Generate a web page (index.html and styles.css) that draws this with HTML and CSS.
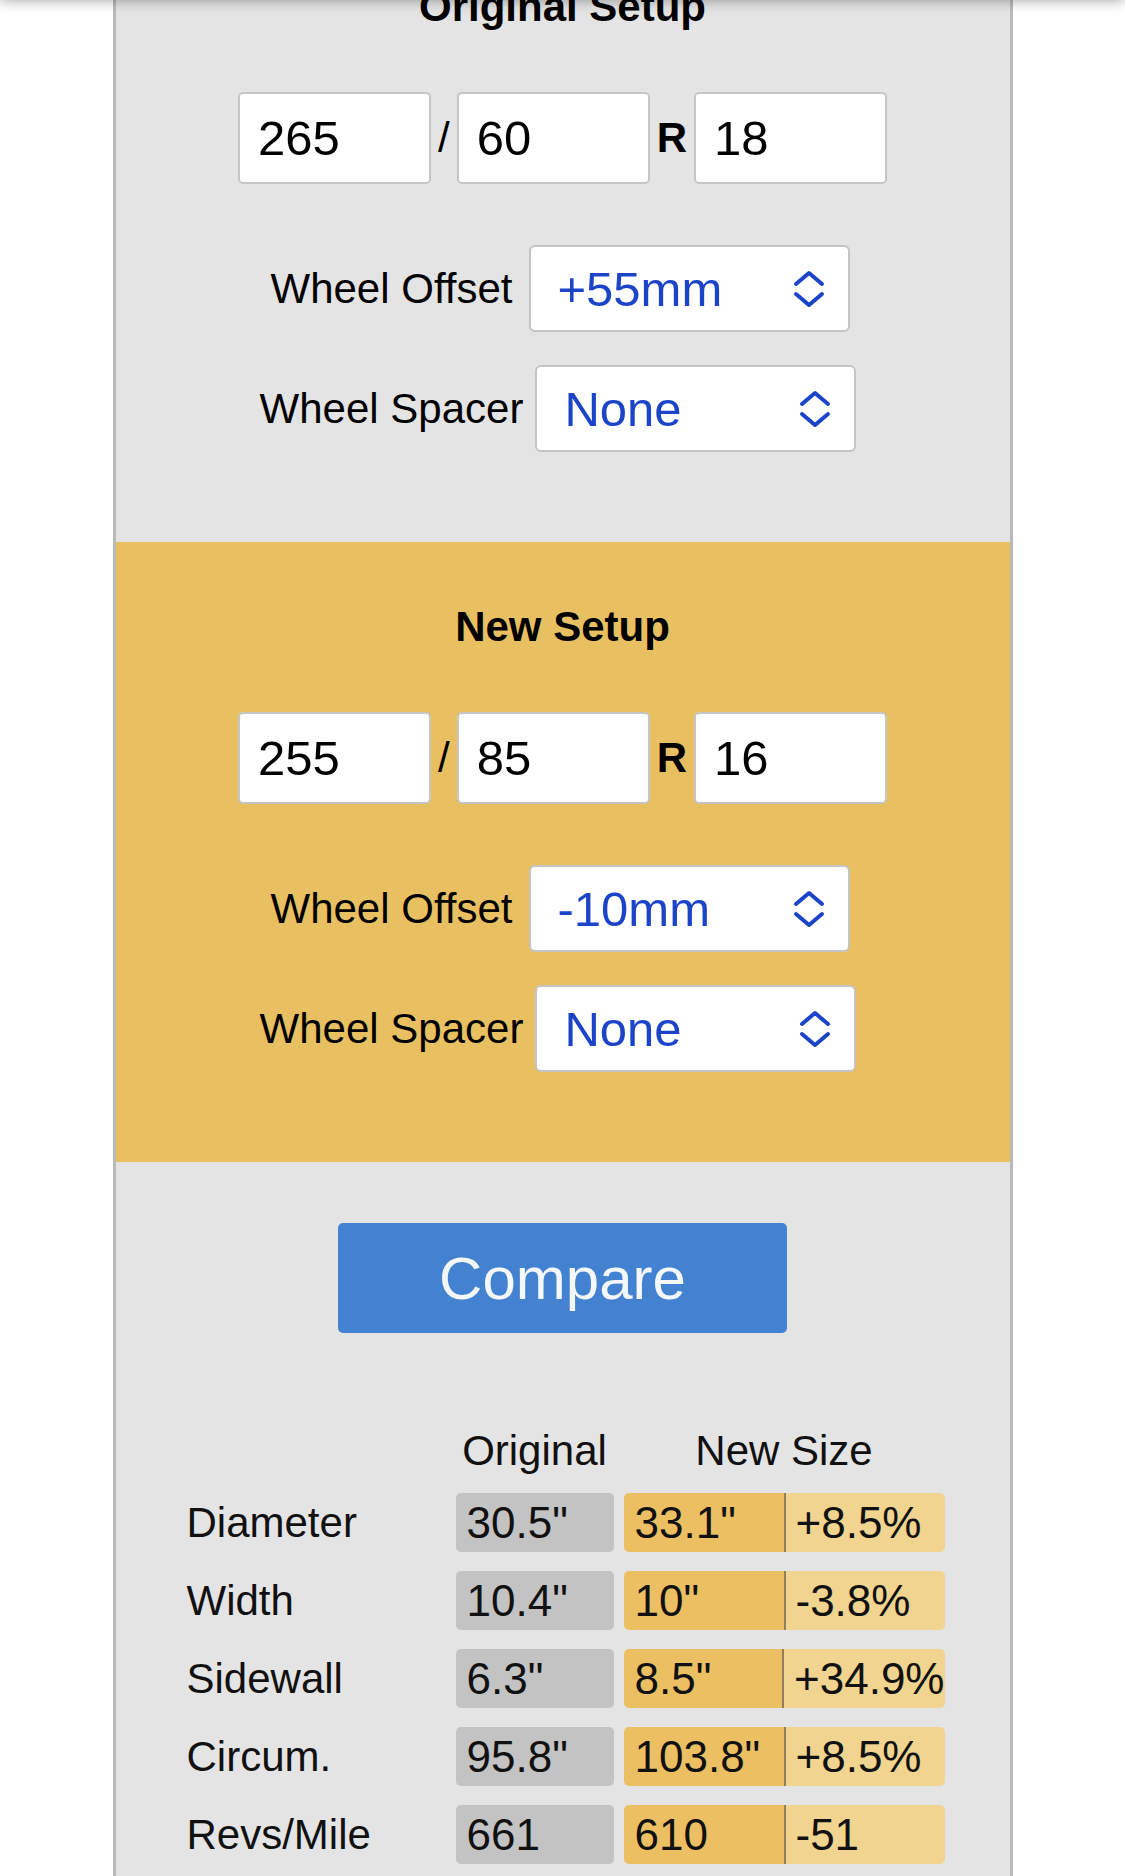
FILE: index.html
```html
<!DOCTYPE html>
<html lang="en">
<head>
<meta charset="utf-8">
<title>Tire Size Comparison</title>
<link rel="stylesheet" href="styles.css">
</head>
<body>
<div class="topbar"></div>
<main class="calc">
  <section class="setup">
    <h2 class="setup-title">Original Setup</h2>
    <div class="size-row">
      <input class="size-input" type="text" value="265">
      <span class="sep">/</span>
      <input class="size-input" type="text" value="60">
      <span class="sep sep-r">R</span>
      <input class="size-input" type="text" value="18">
    </div>
    <div class="field-row field-row-offset">
      <span class="field-label">Wheel Offset</span>
      <div class="select"><span class="select-value">+55mm</span><svg class="chev" viewBox="0 0 34 38" width="34" height="38"><path d="M4 14 L17 3 L30 14 M4 24 L17 35 L30 24"/></svg></div>
    </div>
    <div class="field-row field-row-second">
      <span class="field-label">Wheel Spacer</span>
      <div class="select"><span class="select-value">None</span><svg class="chev" viewBox="0 0 34 38" width="34" height="38"><path d="M4 14 L17 3 L30 14 M4 24 L17 35 L30 24"/></svg></div>
    </div>
  </section>

  <section class="setup setup-new">
    <h2 class="setup-title">New Setup</h2>
    <div class="size-row">
      <input class="size-input" type="text" value="255">
      <span class="sep">/</span>
      <input class="size-input" type="text" value="85">
      <span class="sep sep-r">R</span>
      <input class="size-input" type="text" value="16">
    </div>
    <div class="field-row field-row-offset">
      <span class="field-label">Wheel Offset</span>
      <div class="select"><span class="select-value">-10mm</span><svg class="chev" viewBox="0 0 34 38" width="34" height="38"><path d="M4 14 L17 3 L30 14 M4 24 L17 35 L30 24"/></svg></div>
    </div>
    <div class="field-row field-row-second">
      <span class="field-label">Wheel Spacer</span>
      <div class="select"><span class="select-value">None</span><svg class="chev" viewBox="0 0 34 38" width="34" height="38"><path d="M4 14 L17 3 L30 14 M4 24 L17 35 L30 24"/></svg></div>
    </div>
  </section>

  <div class="actions">
    <button class="compare-btn" type="button">Compare</button>
  </div>

  <div class="results">
    <div class="res-head"></div>
    <div class="res-head">Original</div>
    <div class="res-head">New Size</div>

    <div class="res-label">Diameter</div>
    <div class="cell-orig">30.5"</div>
    <div class="cell-new"><span class="new-val">33.1"</span><span class="new-diff">+8.5%</span></div>

    <div class="res-label">Width</div>
    <div class="cell-orig">10.4"</div>
    <div class="cell-new"><span class="new-val">10"</span><span class="new-diff">-3.8%</span></div>

    <div class="res-label">Sidewall</div>
    <div class="cell-orig">6.3"</div>
    <div class="cell-new"><span class="new-val">8.5"</span><span class="new-diff">+34.9%</span></div>

    <div class="res-label">Circum.</div>
    <div class="cell-orig">95.8"</div>
    <div class="cell-new"><span class="new-val">103.8"</span><span class="new-diff">+8.5%</span></div>

    <div class="res-label">Revs/Mile</div>
    <div class="cell-orig">661</div>
    <div class="cell-new"><span class="new-val">610</span><span class="new-diff">-51</span></div>
  </div>
</main>
</body>
</html>
```

FILE: styles.css
```css
* {
  box-sizing: border-box;
}

html, body {
  margin: 0;
  padding: 0;
  background: #ffffff;
}

body {
  font-family: "Liberation Sans", Arial, Helvetica, sans-serif;
  color: #000;
  overflow: hidden;
}

.topbar {
  position: fixed;
  top: -40px;
  left: 0;
  right: 0;
  height: 40px;
  background: #ffffff;
  box-shadow: 0 0 14px rgba(0, 0, 0, 0.38);
  z-index: 10;
}

.calc {
  width: 900px;
  margin: -78px auto 0;
  background: #e4e4e4;
  border-left: 3px solid #bababa;
  border-right: 3px solid #bababa;
  padding-bottom: 200px;
}

.setup {
  padding: 61px 0 90px;
}

.setup-new {
  background: #e9c061;
}

.setup-title {
  margin: 0;
  font-size: 42px;
  line-height: 48px;
  font-weight: 700;
  text-align: center;
}

.size-row {
  margin-top: 61px;
  display: flex;
  justify-content: center;
  align-items: center;
  gap: 7px;
}

.size-input {
  width: 193px;
  height: 92px;
  margin: 0;
  padding: 0 0 0 18px;
  border: 2px solid #c6c6c6;
  border-radius: 5px;
  background: #fff;
  font-family: "Liberation Sans", Arial, sans-serif;
  font-size: 49px;
  color: #000;
  outline: none;
}

.sep {
  font-size: 42px;
  line-height: 48px;
}

.sep-r {
  font-weight: 700;
}

.field-row {
  margin-top: 61px;
  display: flex;
  justify-content: center;
  align-items: center;
  gap: 12px;
  padding-right: 9px;
}

.field-row-offset {
  gap: 16px;
  padding-right: 5px;
}

.field-row-second {
  margin-top: 33px;
}

.field-label {
  font-size: 42px;
  line-height: 48px;
}

.select {
  width: 321px;
  height: 87px;
  display: flex;
  align-items: center;
  justify-content: space-between;
  padding: 0 22px 0 27px;
  background: #fff;
  border: 2px solid #c4c4c4;
  border-radius: 6px;
}

.select-value {
  font-size: 49px;
  color: #1b44c9;
}

.chev {
  display: block;
  fill: none;
  stroke: #1b44c9;
  stroke-width: 4;
  stroke-linecap: round;
  stroke-linejoin: round;
}

.actions {
  padding-top: 61px;
  display: flex;
  justify-content: center;
}

.compare-btn {
  width: 449px;
  height: 110px;
  margin: 0;
  border: none;
  border-radius: 5px;
  background: #4282d0;
  color: #f4f7fb;
  font-family: "Liberation Sans", Arial, sans-serif;
  font-size: 60px;
  padding: 0;
}

.results {
  margin-top: 94px;
  margin-left: 71px;
  display: grid;
  grid-template-columns: 259px 158px 321px;
  column-gap: 10px;
  row-gap: 19px;
  font-size: 42px;
}

.res-head {
  line-height: 47px;
  text-align: center;
  color: #111;
}

.res-label {
  line-height: 59px;
  color: #111;
}

.cell-orig {
  height: 59px;
  line-height: 59px;
  padding-left: 11px;
  background: #c3c3c3;
  border-radius: 5px;
  color: #111;
  font-size: 44px;
  white-space: nowrap;
}

.cell-new {
  display: flex;
  height: 59px;
  line-height: 59px;
  color: #111;
  font-size: 44px;
  white-space: nowrap;
}

.new-val {
  width: 160px;
  padding-left: 11px;
  background: #ecc062;
  border-radius: 5px 0 0 5px;
}

.new-diff {
  flex: 1;
  padding-left: 10px;
  background: #f0d48f;
  border-left: 2px solid #8e7f5f;
  border-radius: 0 5px 5px 0;
}
```
